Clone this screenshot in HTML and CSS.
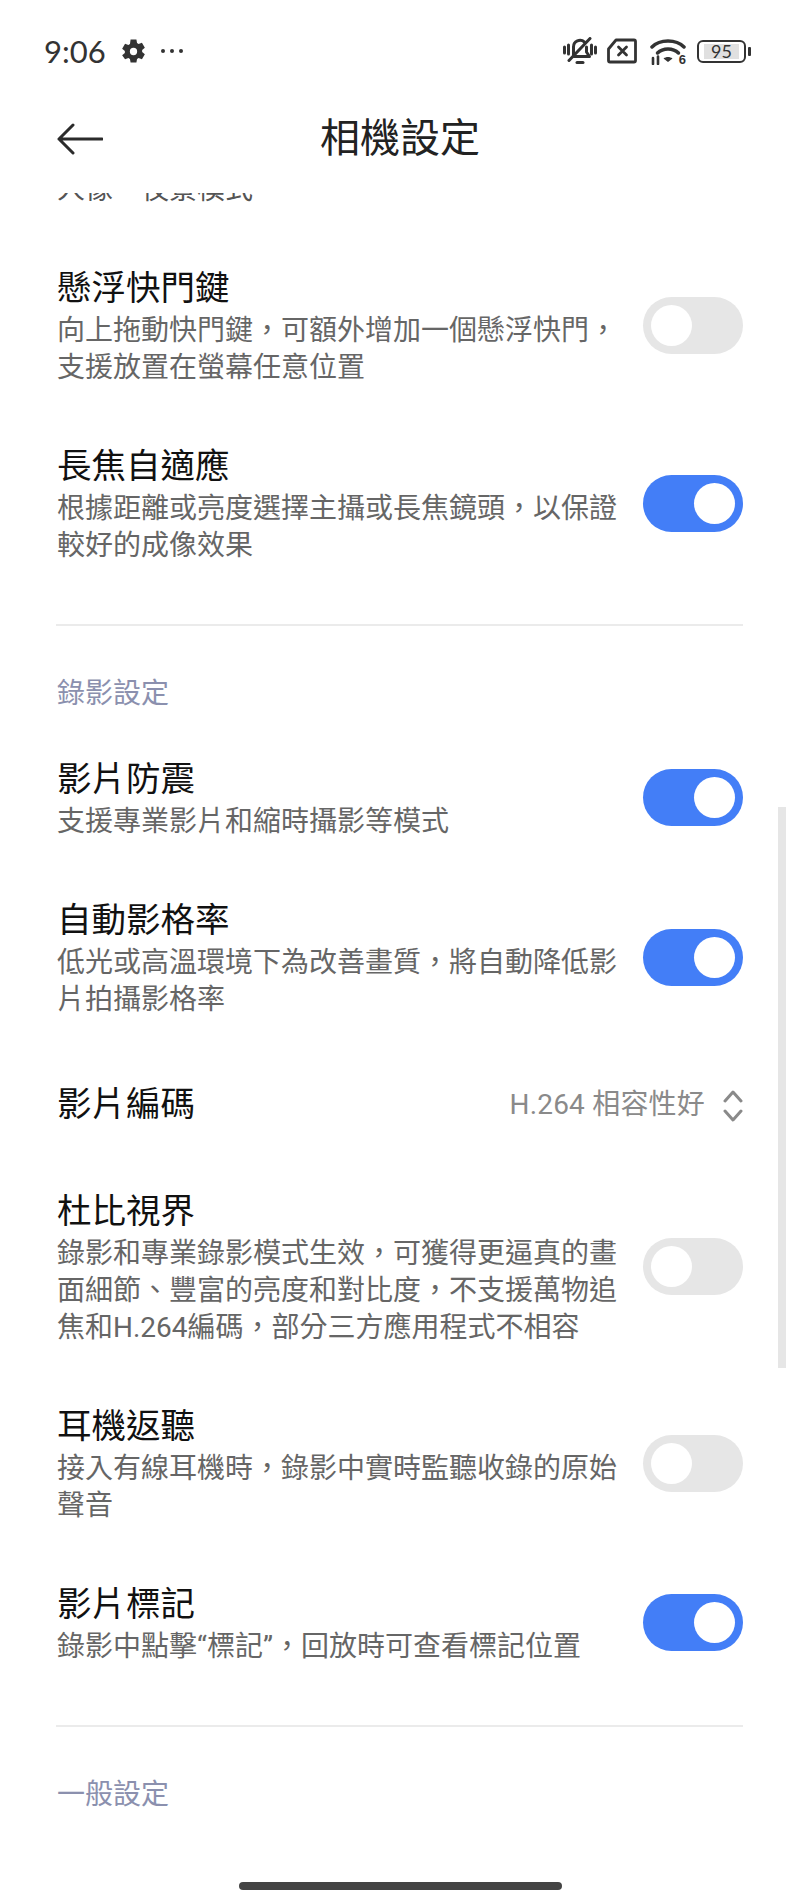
FILE: index.html
```html
<!DOCTYPE html>
<html lang="zh-Hant">
<head>
<meta charset="utf-8">
<title>相機設定</title>
<link rel="stylesheet" href="styles.css">
</head>
<body>
<div class="screen">
  <div class="statusbar">
    <div class="status-left">
      <span class="time">9:06</span>
      <svg class="gear" viewBox="0 0 24 24"><path fill-rule="evenodd" d="M9.200 .5h5.600l.6 3.300 1.500.9 3.200-1.100 2.800 4.800-2.600 2.200v1.800l2.600 2.200-2.800 4.800-3.200-1.100-1.500.9-.6 3.300H9.200l-.6-3.300-1.500-.9-3.200 1.100L1.100 15.600l2.600-2.200v-1.800L1.100 9.400l2.800-4.800 3.200 1.100 1.500-.9zM12 8.500a3.500 3.500 0 1 0 0 7 3.500 3.500 0 0 0 0-7z"/></svg>
      <svg class="dots" viewBox="0 0 24 6"><circle cx="3" cy="3" r="2"/><circle cx="12" cy="3" r="2"/><circle cx="21" cy="3" r="2"/></svg>
    </div>
    <div class="status-right">
      <svg class="ic-bell" viewBox="0 0 34 28" fill="none" stroke="#333" stroke-width="3" stroke-linecap="round" stroke-linejoin="round"><path d="M10.500 18V10a6.500 6.500 0 0 1 11-4.800M23.500 10v5l3 4.500H11"/><path d="M14 25.500h6"/><path d="M6 23.500L27 1.500"/><path d="M1.500 10v6M5.500 8v9M28.500 8v9M32.500 10v6"/></svg>
      <svg class="ic-sim" viewBox="0 0 30 26" fill="none" stroke="#333" stroke-width="2.800" stroke-linejoin="round" stroke-linecap="round"><path d="M9 2h18a1.500 1.500 0 0 1 1.500 1.500v19A1.500 1.500 0 0 1 27 24H3a1.500 1.500 0 0 1-1.500-1.500V11z"/><path d="M11.500 9l8 8M19.500 9l-8 8"/></svg>
      <div class="wifi">
        <svg class="ic-wifi" viewBox="0 0 36 27" fill="none" stroke="#333" stroke-width="3.500" stroke-linecap="round"><path d="M2 9C10 1 26 1 34 9"/><path d="M7.500 15C13 9.500 23 9.500 28.500 15"/><path d="M18 24l-4.500-3.500c2.700-2 6.300-2 9 0z" fill="#333" stroke="none"/><path d="M3 20v6M8 18.500v7.500" stroke-width="2.600"/></svg>
        <span class="wifi-six">6</span>
      </div>
      <div class="battery"><div class="battery-body"><span class="battery-level">95</span></div><i class="battery-nub"></i></div>
    </div>
  </div>

  <header class="nav">
    <svg class="back" viewBox="0 0 46 32" fill="none" stroke="#2b2b2b" stroke-width="3" stroke-linecap="round" stroke-linejoin="round"><path d="M45 16H2M16 2L2 16l14 14"/></svg>
    <h1 class="nav-title">相機設定</h1>
  </header>

  <main class="list">
    <div class="clipped">人像、夜景模式</div>

    <div class="row">
      <div class="row-text">
        <div class="row-title">懸浮快門鍵</div>
        <div class="row-sub">向上拖動快門鍵，可額外增加一個懸浮快門，<br>支援放置在螢幕任意位置</div>
      </div>
      <div class="switch"></div>
    </div>

    <div class="row">
      <div class="row-text">
        <div class="row-title">長焦自適應</div>
        <div class="row-sub">根據距離或亮度選擇主攝或長焦鏡頭，以保證<br>較好的成像效果</div>
      </div>
      <div class="switch on"></div>
    </div>

    <hr class="divider">
    <div class="section">錄影設定</div>

    <div class="row">
      <div class="row-text">
        <div class="row-title">影片防震</div>
        <div class="row-sub">支援專業影片和縮時攝影等模式</div>
      </div>
      <div class="switch on"></div>
    </div>

    <div class="row">
      <div class="row-text">
        <div class="row-title">自動影格率</div>
        <div class="row-sub">低光或高溫環境下為改善畫質，將自動降低影<br>片拍攝影格率</div>
      </div>
      <div class="switch on"></div>
    </div>

    <div class="row row-select">
      <div class="row-title">影片編碼</div>
      <div class="select">
        <span class="select-value">H.264 相容性好</span>
        <svg class="chevrons" viewBox="0 0 20 32" fill="none" stroke="#8a8a8a" stroke-width="3" stroke-linecap="round" stroke-linejoin="round"><path d="M2 11l8-9 8 9M2 21l8 9 8-9"/></svg>
      </div>
    </div>

    <div class="row">
      <div class="row-text">
        <div class="row-title">杜比視界</div>
        <div class="row-sub">錄影和專業錄影模式生效，可獲得更逼真的畫<br>面細節、豐富的亮度和對比度，不支援萬物追<br>焦和H.264編碼，部分三方應用程式不相容</div>
      </div>
      <div class="switch"></div>
    </div>

    <div class="row">
      <div class="row-text">
        <div class="row-title">耳機返聽</div>
        <div class="row-sub">接入有線耳機時，錄影中實時監聽收錄的原始<br>聲音</div>
      </div>
      <div class="switch"></div>
    </div>

    <div class="row">
      <div class="row-text">
        <div class="row-title">影片標記</div>
        <div class="row-sub">錄影中點擊“標記”，回放時可查看標記位置</div>
      </div>
      <div class="switch on"></div>
    </div>

    <hr class="divider">
    <div class="section">一般設定</div>
  </main>

  <div class="scrollbar"></div>
  <div class="home-bar"></div>
</div>
</body>
</html>
```
FILE: styles.css
```css
* { box-sizing: border-box; }
html, body { margin: 0; padding: 0; background: #fff; }
body { font-family: Roboto, "Noto Sans CJK TC", sans-serif; color: #111; }
.screen { position: relative; width: 800px; height: 1903px; overflow: hidden; background: #fff; display: flex; flex-direction: column; }

.statusbar { height: 90px; padding: 34px 49px 0 44px; display: flex; justify-content: space-between; align-items: flex-start; }
.status-left { display: flex; align-items: center; height: 34px; }
.time { font-family: Lato, sans-serif; font-size: 31px; line-height: 34px; color: #333; }
.gear { width: 25px; height: 25px; margin-left: 15px; fill: #333; }
.dots { width: 24px; height: 6px; margin-left: 14px; fill: #333; }
.status-right { display: flex; align-items: center; height: 34px; }
.ic-bell { width: 34px; height: 28px; }
.ic-sim { width: 30px; height: 26px; margin-left: 10px; }
.wifi { position: relative; width: 36px; height: 27px; margin-left: 13px; }
.ic-wifi { display: block; width: 36px; height: 27px; }
.wifi-six { position: absolute; right: 0; bottom: -1px; font: 700 13px/13px "Liberation Sans", sans-serif; color: #333; }
.battery { display: flex; align-items: center; margin-left: 11px; }
.battery-body { width: 49px; height: 23px; border: 2.500px solid #333; border-radius: 6px; padding: 2px 5px; }
.battery-level { display: block; height: 100%; background: #e0e0e0; font: 400 18px/15px Lato, sans-serif; text-align: center; color: #333; }
.battery-nub { display: block; width: 3px; height: 9px; margin-left: 2px; background: #333; border-radius: 1px; }

.nav { position: relative; height: 103px; display: flex; align-items: center; justify-content: center; padding-bottom: 5px; }
.back { position: absolute; left: 57px; top: 33px; width: 46px; height: 32px; }
.nav-title { margin: 0; font-size: 40px; line-height: 50px; font-weight: 400; color: #222; }

.list { flex: 1; overflow: hidden; padding: 0 57px 0 56px; width: 800px; }
.clipped { margin-top: -22px; padding: 0 0 30px 1px; font-size: 28px; line-height: 37px; color: #555; }
.row { display: flex; justify-content: space-between; align-items: center; padding: 30px 0 30px 1px; }
.row-text { width: 560px; }
.row-title { font-size: 34.500px; line-height: 40px; color: #111; margin-bottom: 4px; }
.row-sub { font-size: 28px; line-height: 37px; color: #666; white-space: nowrap; }
.switch { position: relative; flex: none; width: 100px; height: 57px; margin: 0 0 4px; border-radius: 29px; background: #e6e6e6; }
.switch::after { content: ""; position: absolute; left: 8px; top: 8px; width: 41px; height: 41px; border-radius: 50%; background: #fff; }
.switch.on { background: #437ef7; }
.switch.on::after { left: 51px; }

.row-select { height: 113px; padding: 0 0 2px 1px; }
.row-select .row-title { margin: 0; }
.select { display: flex; align-items: center; }
.select-value { padding-top: 2px; font-size: 28px; line-height: 37px; color: #8a8a8a; letter-spacing: .2px; }
.chevrons { width: 20px; height: 32px; margin: 5px 0 0 18px; }

.divider { height: 2px; border: 0; background: #ebebeb; margin: 30px 0 0; }
.section { padding: 49px 0 17px 1px; font-size: 28px; line-height: 37px; color: #8b90ae; }

.scrollbar { position: absolute; left: 778px; top: 807px; width: 8px; height: 561px; background: #e6e6e6; }
.home-bar { position: absolute; left: 239px; top: 1882px; width: 323px; height: 8px; border-radius: 4px; background: #444; }
```
